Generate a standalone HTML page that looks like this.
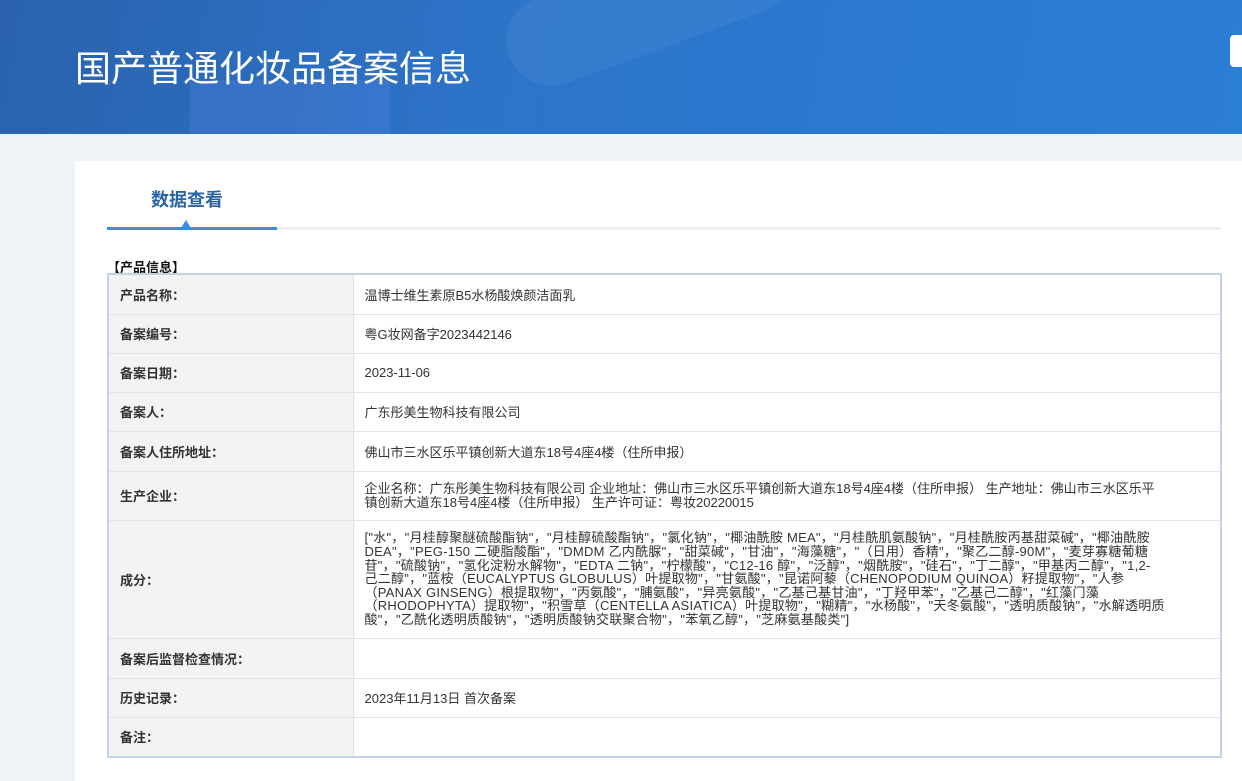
<!DOCTYPE html>
<html><head><meta charset="utf-8"><style>
*{margin:0;padding:0;box-sizing:border-box}
body{width:1242px;height:774px;overflow:hidden;background:#eff3f6;font-family:"Liberation Sans","Noto Sans CJK SC",sans-serif;position:relative}
.hd{position:absolute;left:0;top:0;width:1242px;height:134px;background:linear-gradient(100deg,#2a62ad 0%,#2d74c9 40%,#2a78d0 70%,#2b7fd4 100%);overflow:hidden}
.hd .b1{position:absolute;left:190px;top:80px;width:200px;height:60px;background:rgba(90,130,230,.25)}
.hd .b2{position:absolute;left:500px;top:-40px;width:300px;height:90px;border-radius:50px;background:rgba(255,255,255,.05);transform:rotate(-20deg)}
.hd h1{position:absolute;left:75px;top:40px;color:#fff;font-size:36px;font-weight:normal;letter-spacing:0;font-family:"Noto Sans CJK SC",sans-serif;white-space:nowrap}
.hd .tab{position:absolute;right:0;top:35px;width:12px;height:32px;background:#fff;border-radius:4px 0 0 4px}
.card{position:absolute;left:75px;top:161px;width:1180px;height:620px;background:#fff}
.tabt{position:absolute;left:151px;top:186px;font-size:18px;font-weight:bold;color:#2a63a3}
.ln{position:absolute;left:107px;top:227px;width:1114px;height:3px;background:#eeeeee}
.ln2{position:absolute;left:107px;top:227px;width:170px;height:3px;background:#3b8fd9}
.tri{position:absolute;left:181px;top:220px;width:0;height:0;border-left:5px solid transparent;border-right:5px solid transparent;border-bottom:8px solid #3b8fd9}
.sec{position:absolute;left:107px;top:257px;font-size:13px;font-weight:bold;color:#111}
table{position:absolute;left:107px;top:273px;width:1115px;border-collapse:collapse;border:2px solid #c3d2e8;font-size:13px;color:#333}
td{border-bottom:1px solid #e3e3e3;vertical-align:middle}
td.l{width:245px;background:#f3f3f3;font-weight:bold;padding-left:11px;border-right:1px solid #e3e3e3}
td.v{padding-left:11px}
.ing{line-height:13.6px;white-space:nowrap;font-size:13px;letter-spacing:0.25px}
</style></head><body>
<div class="hd"><div class="b1"></div><div class="b2"></div><h1>国产普通化妆品备案信息</h1><div class="tab"></div></div>
<div class="card"></div>
<div class="tabt">数据查看</div>
<div class="ln"></div><div class="ln2"></div><div class="tri"></div>
<div class="sec">【产品信息】</div>
<table>
<tr style="height:40px"><td class="l">产品名称：</td><td class="v">温博士维生素原B5水杨酸焕颜洁面乳</td></tr>
<tr style="height:39px"><td class="l">备案编号：</td><td class="v">粤G妆网备字2023442146</td></tr>
<tr style="height:39px"><td class="l">备案日期：</td><td class="v">2023-11-06</td></tr>
<tr style="height:39px"><td class="l">备案人：</td><td class="v">广东彤美生物科技有限公司</td></tr>
<tr style="height:40px"><td class="l">备案人住所地址：</td><td class="v">佛山市三水区乐平镇创新大道东18号4座4楼（住所申报）</td></tr>
<tr style="height:49px"><td class="l">生产企业：</td><td class="v" style="line-height:14px">企业名称：广东彤美生物科技有限公司 企业地址：佛山市三水区乐平镇创新大道东18号4座4楼（住所申报） 生产地址：佛山市三水区乐平<br>镇创新大道东18号4座4楼（住所申报） 生产许可证：粤妆20220015</td></tr>
<tr style="height:118px"><td class="l">成分：</td><td class="v ing">["水"，"月桂醇聚醚硫酸酯钠"，"月桂醇硫酸酯钠"，"氯化钠"，"椰油酰胺 MEA"，"月桂酰肌氨酸钠"，"月桂酰胺丙基甜菜碱"，"椰油酰胺<br>DEA"，"PEG-150 二硬脂酸酯"，"DMDM 乙内酰脲"，"甜菜碱"，"甘油"，"海藻糖"，"（日用）香精"，"聚乙二醇-90M"，"麦芽寡糖葡糖<br>苷"，"硫酸钠"，"氢化淀粉水解物"，"EDTA 二钠"，"柠檬酸"，"C12-16 醇"，"泛醇"，"烟酰胺"，"硅石"，"丁二醇"，"甲基丙二醇"，"1,2-<br>己二醇"，"蓝桉（EUCALYPTUS GLOBULUS）叶提取物"，"甘氨酸"，"昆诺阿藜（CHENOPODIUM QUINOA）籽提取物"，"人参<br>（PANAX GINSENG）根提取物"，"丙氨酸"，"脯氨酸"，"异亮氨酸"，"乙基己基甘油"，"丁羟甲苯"，"乙基己二醇"，"红藻门藻<br>（RHODOPHYTA）提取物"，"积雪草（CENTELLA ASIATICA）叶提取物"，"糊精"，"水杨酸"，"天冬氨酸"，"透明质酸钠"，"水解透明质<br>酸"，"乙酰化透明质酸钠"，"透明质酸钠交联聚合物"，"苯氧乙醇"，"芝麻氨基酸类"]</td></tr>
<tr style="height:40px"><td class="l">备案后监督检查情况：</td><td class="v"></td></tr>
<tr style="height:39px"><td class="l">历史记录：</td><td class="v">2023年11月13日 首次备案</td></tr>
<tr style="height:40px"><td class="l">备注：</td><td class="v"></td></tr>
</table>
</body></html>
